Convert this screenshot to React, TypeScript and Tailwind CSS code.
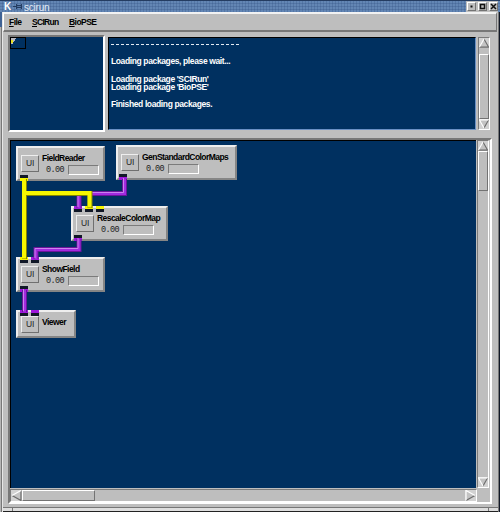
import React from "react";

const raised = "border border-t-white border-l-white border-r-[#737373] border-b-[#737373] bg-[#bebebe]";
const sunken = "border border-t-[#7b7b7b] border-l-[#7b7b7b] border-r-white border-b-white";

type Port = { x: number; color: string };
type ModuleProps = {
  title: string;
  place: string;
  time?: boolean;
  inputs?: Port[];
  output?: Port;
};

const YELLOW = "bg-[#f5f500]";
const PURPLE = "bg-[#9f18dc]";

function Arrow({ dir, className }: { dir: "up" | "down" | "left" | "right"; className: string }) {
  const shapes = {
    up: { body: "5.5,1 10.5,10 0.5,10", light: "M0.5 10L5.5 1", dark: "M5.5 1L10.5 10H0.5" },
    down: { body: "0.5,1 10.5,1 5.5,10", light: "M5.5 10L0.5 1H10.5", dark: "M10.5 1L5.5 10" },
    left: { body: "1,5.5 10,0.5 10,10.5", light: "M1 5.5L10 0.5", dark: "M10 0.5V10.5L1 5.5" },
    right: { body: "1,0.5 10,5.5 1,10.5", light: "M1 10.5V0.5L10 5.5", dark: "M10 5.5L1 10.5" },
  };
  const s = shapes[dir];
  return (
    <svg viewBox="0 0 11 11" preserveAspectRatio="none" className={`block shrink-0 bg-[#d2d2d2] ${className}`}>
      <polygon points={s.body} fill="#c3c3c3" />
      <path d={s.dark} fill="none" stroke="#6b6b6b" strokeWidth="1.2" />
      <path d={s.light} fill="none" stroke="#ffffff" strokeWidth="1.2" />
    </svg>
  );
}

function Module({ title, place, time = true, inputs = [], output }: ModuleProps) {
  return (
    <div className={`absolute border-2 border-t-[#eeeeee] border-l-[#eeeeee] border-r-[#858585] border-b-[#858585] bg-[#bebebe] ${place}`}>
      <div className={`flex gap-[3px] pl-[3px] ${time ? "pt-[7px]" : "pt-[4px]"}`}>
        <button className="h-[17px] w-[18px] shrink-0 border border-t-[#eeeeee] border-l-[#eeeeee] border-r-[#707070] border-b-[#707070] bg-[#bebebe] text-[8.5px] leading-[15px] tracking-[-0.3px] text-[#222]">
          UI
        </button>
        <div className={time ? "-mt-[3px]" : ""}>
          <div className="h-[12px] whitespace-nowrap text-[8.5px] font-bold leading-[12px] tracking-[-0.55px] text-black">{title}</div>
          {time && (
            <div className="flex items-center pl-[4px]">
              <span className="w-[22px] font-['Liberation_Mono',monospace] text-[8.5px] leading-[12px] tracking-[-0.6px] text-[#222]">0.00</span>
              <span className={`h-[10px] w-[31px] ${sunken}`} />
            </div>
          )}
        </div>
      </div>
      {inputs.map((p) => (
        <span key={p.x} style={{ left: p.x }} className="absolute -top-[2px] flex h-[6px] w-[8px] flex-col">
          <span className={`h-[3px] ${p.color}`} />
          <span className="h-[3px] bg-[#111827]" />
        </span>
      ))}
      {output && (
        <span style={{ left: output.x }} className="absolute -bottom-[2px] flex h-[6px] w-[8px] flex-col">
          <span className="h-[3px] bg-[#111827]" />
          <span className={`h-[3px] ${output.color}`} />
        </span>
      )}
    </div>
  );
}

function Wires() {
  const purple = [
    "M113.5 38V52.5H68V67",
    "M68 98V108.5H25V118",
    "M13.5 149V171",
  ];
  const yellow = ["M13.5 38V118", "M15 52.5H79V67"];
  return (
    <svg className="pointer-events-none absolute left-0 top-0 h-[348px] w-[300px]" fill="none">
      {purple.map((d) => (
        <g key={d}>
          <path d={d} stroke="#6a159a" strokeWidth="5" />
          <path d={d} stroke="#a22bdf" strokeWidth="3" />
          <path d={d} stroke="#cb82ef" strokeWidth="1" transform="translate(-1 -1)" />
        </g>
      ))}
      {yellow.map((d) => (
        <g key={d}>
          <path d={d} stroke="#858500" strokeWidth="5" />
          <path d={d} stroke="#f7f700" strokeWidth="4" transform="translate(-.5 -.5)" />
        </g>
      ))}
    </svg>
  );
}

function WindowButton({ children }: { children: React.ReactNode }) {
  return (
    <span className={`flex h-[9px] w-[9px] items-center justify-center ${raised}`}>
      <svg viewBox="0 0 7 7" className="h-[7px] w-[7px]" fill="none" stroke="#111" strokeWidth="1.5">{children}</svg>
    </span>
  );
}

export default function App() {
  return (
    <div className="flex h-[512px] w-[500px] flex-col overflow-hidden bg-[#bebebe] font-['Liberation_Sans',Arial,sans-serif] text-black">
      <header className="flex h-[12px] shrink-0 items-center border-t border-[#243c61] bg-[#6386b4] bg-[repeating-linear-gradient(90deg,transparent_0_2px,rgba(45,75,125,.25)_2px_3px),repeating-linear-gradient(0deg,transparent_0_2px,rgba(40,70,120,.25)_2px_3px)] pl-[4px] pr-[2px]">
        <span className="w-[9px] text-[10px] font-bold leading-[11px] text-white">K</span>
        <svg viewBox="0 0 9 7" className="h-[7px] w-[9px]" fill="none" stroke="#243c61">
          <path d="M0 3.5H3M3.5 1V6M4 2.5H8M4 4.5H8M8.5 1V6" />
        </svg>
        <span className="ml-[2px] mt-[2px] grow text-[10px] leading-[11px] tracking-[-0.2px] text-[#e4ecf6]">scirun</span>
        <div className="flex h-full items-center gap-[2px] bg-[#bebebe] pl-[1px]">
          <WindowButton><rect x="2.5" y="2.5" width="2" height="2" fill="#111" stroke="none" /></WindowButton>
          <WindowButton><rect x="1.5" y="1.5" width="4" height="4" /></WindowButton>
          <WindowButton><path d="M1 1L6 6M6 1L1 6" /></WindowButton>
        </div>
      </header>

      <div className="flex min-h-0 grow">
        <div className="flex w-[2px] shrink-0 flex-col">
          <span className="h-[15px] bg-[#3f6295]" />
          <span className="grow border-r border-[#777] bg-[#b5b5b5]" />
        </div>
        <main className="flex min-w-0 grow flex-col border-l border-[#e6e6e6]">
          <nav className="flex h-[20px] w-[494px] shrink-0 items-center border-b-2 border-l border-r border-t-2 border-b-[#777] border-l-white border-r-[#777] border-t-[#f2f2f2] pl-[5px] text-[8.5px] font-bold tracking-[-0.55px]">
            <span className="w-[23px]"><u>F</u>ile</span>
            <span className="w-[37px] tracking-[-0.7px]"><u>S</u>CIRun</span>
            <span><u>B</u>ioPSE</span>
          </nav>

          <section className="ml-[5px] mt-[3px] flex h-[97px] shrink-0">
            <div className="h-[97px] w-[97px] border-2 border-b-white border-l-[#777] border-r-white border-t-[#777] bg-[#003060]">
              <div className="h-[12px] w-[16px] border border-black">
                <svg viewBox="0 0 7 7" className="h-[7px] w-[7px]">
                  <path d="M0 0H5V1H4V3H3V4H2V6H0Z" fill="#b9b9c0" />
                  <path d="M0 2H2V5H0Z" fill="#e4df22" />
                </svg>
              </div>
            </div>
            <div className="ml-[3px] mt-[2px] h-[93px] w-[368px] border border-b-[#6a90c4] border-l-black border-r-[#6a90c4] border-t-black bg-[#003060] pl-[2px] pt-[2px] text-[8.5px] font-bold leading-[8.6px] tracking-[-0.38px] text-white">
              <div className="mb-[9.4px] h-[8px] pt-[4px]">
                <div className="h-px w-[128px] bg-[repeating-linear-gradient(90deg,#e3eaf2_0_3px,transparent_3px_5px)]" />
              </div>
              <p>Loading packages, please wait...</p>
              <p className="mt-[8.6px]">Loading package 'SCIRun'</p>
              <p>Loading package 'BioPSE'</p>
              <p className="mt-[8.6px]">Finished loading packages.</p>
            </div>
            <div className={`ml-[2px] mt-[2px] flex h-[93px] w-[12px] flex-col bg-[#bebebe] ${sunken}`}>
              <Arrow dir="up" className="h-[10px] w-[10px]" />
              <div className={`mt-[6px] grow ${raised}`} />
              <Arrow dir="down" className="h-[10px] w-[10px]" />
            </div>
          </section>

          <section className="ml-[5px] mt-[6px] flex h-[366px] w-[484px] shrink-0 flex-col border-2 border-b-white border-l-[#777] border-r-white border-t-[#777]">
            <div className="flex h-[348px]">
              <div className="relative w-[466px] shrink-0 overflow-hidden border-l border-t border-black bg-[#003060]">
                <Module title="FieldReader" place="left-[5px] top-[5px] w-[89px] h-[35px]" output={{ x: 2, color: YELLOW }} />
                <Module title="GenStandardColorMaps" place="left-[105px] top-[4px] w-[121px] h-[35px]" output={{ x: 1, color: PURPLE }} />
                <Module title="RescaleColorMap" place="left-[60px] top-[65px] w-[97px] h-[35px]" inputs={[{ x: 1, color: PURPLE }, { x: 12, color: YELLOW }, { x: 23, color: YELLOW }]} output={{ x: 1, color: PURPLE }} />
                <Module title="ShowField" place="left-[5px] top-[116px] w-[89px] h-[35px]" inputs={[{ x: 2, color: YELLOW }, { x: 13, color: PURPLE }]} output={{ x: 2, color: PURPLE }} />
                <Module title="Viewer" time={false} place="left-[5px] top-[169px] w-[60px] h-[28px]" inputs={[{ x: 2, color: PURPLE }, { x: 13, color: PURPLE }]} />
                <Wires />
              </div>
              <div className={`ml-px flex w-[12px] shrink-0 flex-col ${sunken}`}>
                <Arrow dir="up" className="h-[10px] w-[10px]" />
                <div className={`h-[40px] ${raised}`} />
                <div className="grow" />
                <Arrow dir="down" className="h-[10px] w-[10px]" />
              </div>
            </div>
            <div className={`mt-px flex h-[13px] w-[467px] shrink-0 ${sunken}`}>
              <Arrow dir="left" className="h-[11px] w-[11px]" />
              <div className={`w-[73px] ${raised}`} />
              <div className="grow" />
              <Arrow dir="right" className="h-[11px] w-[11px]" />
            </div>
          </section>
          <footer className="mt-auto flex h-[5px] border-b border-t border-b-[#222] border-t-[#777]">
            <span className="w-[10px] border-r border-[#777] bg-[#dcdcdc]" />
            <span className="grow bg-[#dedede]" />
            <span className="w-[10px] border-l border-[#777] bg-[#dcdcdc]" />
          </footer>
        </main>
        <div className="w-[2px] shrink-0 border-l border-[#777] bg-[#111827]" />
      </div>
    </div>
  );
}
